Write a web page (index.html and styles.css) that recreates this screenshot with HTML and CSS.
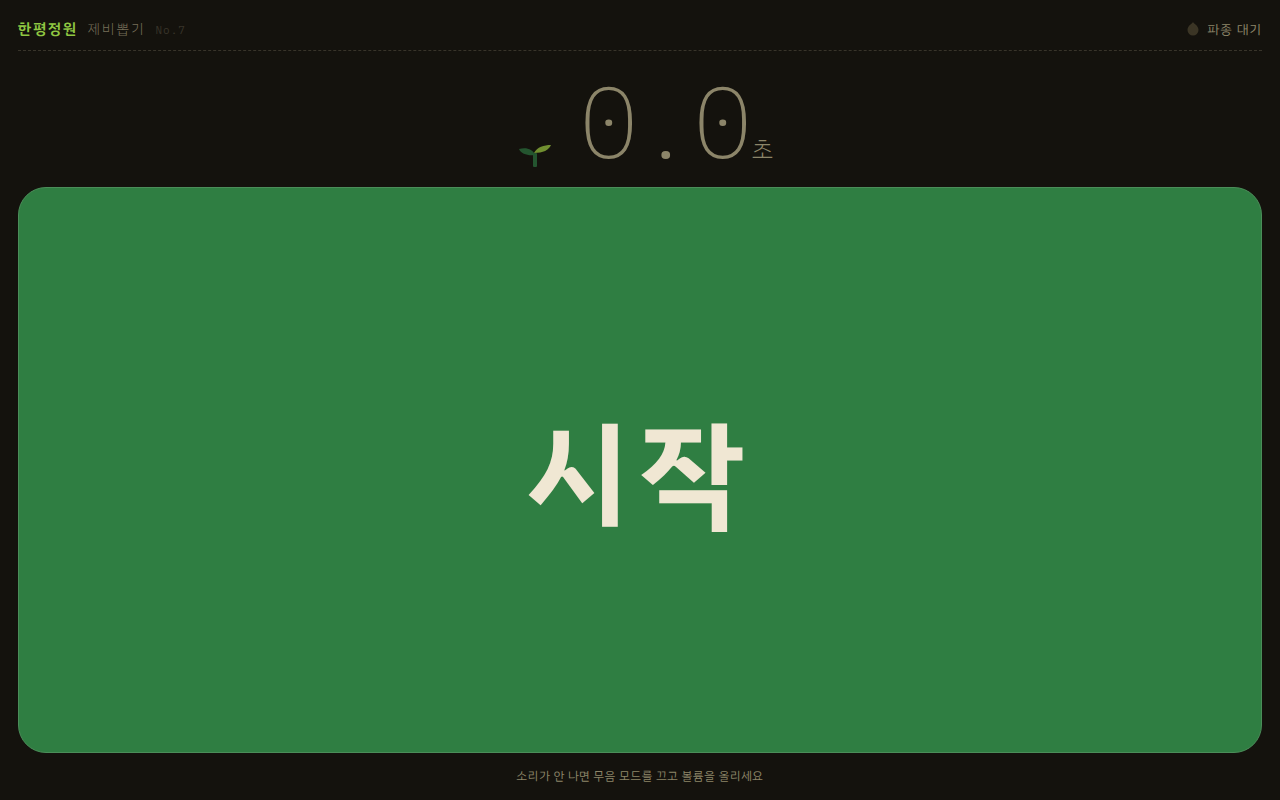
FILE: index.html
```html
<!DOCTYPE html>
<html lang="ko">
<head>
  <meta charset="utf-8">
  <meta name="viewport" content="width=device-width, initial-scale=1">
  <title>한평정원 제비뽑기</title>
  <link rel="stylesheet" href="styles.css">
</head>
<body>
  <header class="topbar">
    <h1 class="brand">한평정원</h1>
    <span class="subtitle">제비뽑기</span>
    <span class="number">No.7</span>
    <div class="status">
      <svg class="seed" viewBox="0 0 12 14" aria-hidden="true">
        <path d="M6 0C7 2 11.500 3.500 11.500 8A5.500 5.500 0 0 1 .5 8C.5 3.500 5 2 6 0Z"/>
      </svg>
      <span>파종 대기</span>
    </div>
  </header>

  <main class="game">
    <div class="timer">
      <svg class="sprout" viewBox="0 0 34 26" aria-hidden="true">
        <rect class="stem" x="15" y="10" width="4" height="14" rx="1"/>
        <path class="leaf-left" d="M1 6C8 4 15 6 17 12C10 13 3 11 1 6Z"/>
        <path class="leaf-right" d="M16 10C19 4 26 2 33 2C31 7 25 10 16 10Z"/>
      </svg>
      <span class="time">0.0</span>
      <span class="unit">초</span>
    </div>
    <button class="start" type="button">시작</button>
  </main>

  <footer class="hint">소리가 안 나면 무음 모드를 끄고 볼륨을 올리세요</footer>
</body>
</html>
```
FILE: styles.css
```css
* {
  box-sizing: border-box;
}

html, body {
  height: 100%;
  margin: 0;
}

body {
  display: flex;
  flex-direction: column;
  padding: 14px 18px 15px;
  background: #14120d;
  color: #8c8569;
  font-family: "IBM Plex Sans KR", "Noto Sans CJK KR", sans-serif;
}

.topbar {
  display: flex;
  align-items: baseline;
  gap: 10px;
  height: 37px;
  padding-top: 5px;
  border-bottom: 1px dashed #38342a;
}

.brand {
  margin: 0;
  color: #8fc742;
  font-size: 15px;
  font-weight: 600;
  line-height: 20px;
  letter-spacing: 0.1em;
}

.subtitle {
  color: #776f59;
  font-size: 14px;
  font-weight: 300;
  line-height: 20px;
  letter-spacing: 2px;
}

.number {
  color: #38342a;
  font-family: "IBM Plex Mono", "Liberation Mono", monospace;
  font-size: 11px;
  letter-spacing: 1px;
}

.status {
  display: flex;
  align-items: center;
  gap: 9px;
  align-self: flex-start;
  margin-left: auto;
  font-size: 13px;
  line-height: 22px;
  letter-spacing: 1px;
}

.seed {
  width: 12px;
  height: 14px;
  margin-bottom: 2px;
  fill: #3b3525;
}

.game {
  display: flex;
  flex: 1;
  flex-direction: column;
  min-height: 0;
}

.timer {
  display: flex;
  align-items: baseline;
  justify-content: center;
  height: 136px;
  padding-left: 11px;
}

.sprout {
  align-self: flex-end;
  width: 34px;
  height: 26px;
  margin: 0 27px 18px 0;
}

.stem, .leaf-left {
  fill: #24552f;
}

.leaf-right {
  fill: #718f30;
}

.time {
  font-family: "IBM Plex Mono", "Liberation Mono", monospace;
  font-size: 100px;
  font-weight: 200;
  line-height: 140px;
  letter-spacing: -0.03em;
}

.unit {
  margin-left: 2px;
  font-size: 24px;
  font-weight: 300;
}

.start {
  flex: 1;
  padding: 10px 0 0;
  border: 1px solid #4b8d59;
  border-radius: 28px;
  background: #2f7e42;
  color: #f0e7d3;
  font-family: inherit;
  font-size: 116px;
  font-weight: 700;
  letter-spacing: 0.1em;
}

.hint {
  padding-top: 14px;
  font-size: 12px;
  line-height: 18px;
  letter-spacing: 0.04em;
  text-align: center;
}
```
